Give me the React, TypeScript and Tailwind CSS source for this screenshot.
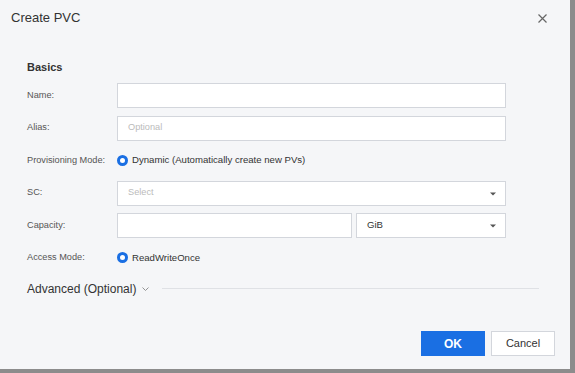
import React from "react";

const Caret = () => (
  <svg width="6" height="4" viewBox="0 0 6 4" className="absolute right-[9px] top-[10px]">
    <path d="M0 0.5 H6 L3 3.5 Z" fill="#555" />
  </svg>
);

const Radio = ({ label }: { label: string }) => (
  <div className="flex items-center gap-[4px]">
    <span className="w-[11px] h-[11px] rounded-full border-[3px] border-[#1a6fe3] bg-white box-border" />
    <span className="text-[9.6px] text-[#333]">{label}</span>
  </div>
);

const Row = ({ label, children }: { label: string; children: React.ReactNode }) => (
  <div className="flex items-center h-[25px]">
    <div className="w-[90px] text-[9.2px] text-[#555]">{label}</div>
    <div className="flex-1 flex items-center">{children}</div>
  </div>
);

export default function App() {
  return (
    <div
      className="w-[575px] h-[373px] bg-[#8c8c8c]"
      style={{ fontFamily: '"Liberation Sans", Arial, sans-serif' }}
    >
      <div className="w-[570px] h-[369px] bg-[#f5f6f8] flex flex-col">
        <div className="h-[36px] flex items-center justify-between pl-[11px] pr-[23px]">
          <span className="text-[13px] text-[#333]">Create PVC</span>
          <svg width="9" height="9" viewBox="0 0 9 9">
            <path d="M0.5 0.5 L8.5 8.5 M8.5 0.5 L0.5 8.5" stroke="#666" strokeWidth="1.2" />
          </svg>
        </div>
        <div className="pl-[27px] pr-[31px] pt-[23px]">
          <div className="text-[11px] font-bold text-[#333] leading-[16px]">Basics</div>
          <div className="mt-[8px] flex flex-col gap-[7.5px] w-[479px]">
            <Row label="Name:">
              <div className="w-full h-[25px] bg-white border border-[#d3d6dc]" />
            </Row>
            <Row label="Alias:">
              <div className="w-full h-[25px] bg-white border border-[#d3d6dc] flex items-center pl-[10px] text-[9.2px] text-[#bbb]">
                Optional
              </div>
            </Row>
            <Row label="Provisioning Mode:">
              <Radio label="Dynamic (Automatically create new PVs)" />
            </Row>
            <Row label="SC:">
              <div className="relative w-full h-[25px] bg-white border border-[#d3d6dc] flex items-center pl-[10px] text-[9.2px] text-[#bbb]">
                Select
                <Caret />
              </div>
            </Row>
            <Row label="Capacity:">
              <div className="flex w-full gap-[4px]">
                <div className="w-[235px] h-[25px] bg-white border border-[#d3d6dc]" />
                <div className="relative flex-1 h-[25px] bg-white border border-[#d3d6dc] flex items-center pl-[10px] text-[9.6px] text-[#333]">
                  GiB
                  <Caret />
                </div>
              </div>
            </Row>
            <Row label="Access Mode:">
              <Radio label="ReadWriteOnce" />
            </Row>
          </div>
          <div className="mt-[10px] flex items-center h-[16px]">
            <span className="text-[12px] text-[#333]">Advanced (Optional)</span>
            <svg width="7" height="4" viewBox="0 0 7 4" className="ml-[6px]">
              <path d="M0.5 0.5 L3.5 3.5 L6.5 0.5" stroke="#888" strokeWidth="0.9" fill="none" />
            </svg>
            <div className="ml-[13px] flex-1 h-px bg-[#dfe1e5]" />
          </div>
        </div>
        <div className="flex-1" />
        <div className="flex justify-end gap-[6px] pr-[15px] pb-[13px]">
          <button className="w-[64px] h-[25px] bg-[#1a6fe3] text-white text-[12px] font-bold">OK</button>
          <button className="w-[64px] h-[25px] bg-white border border-[#d3d6dc] text-[#333] text-[11px]">Cancel</button>
        </div>
      </div>
    </div>
  );
}
